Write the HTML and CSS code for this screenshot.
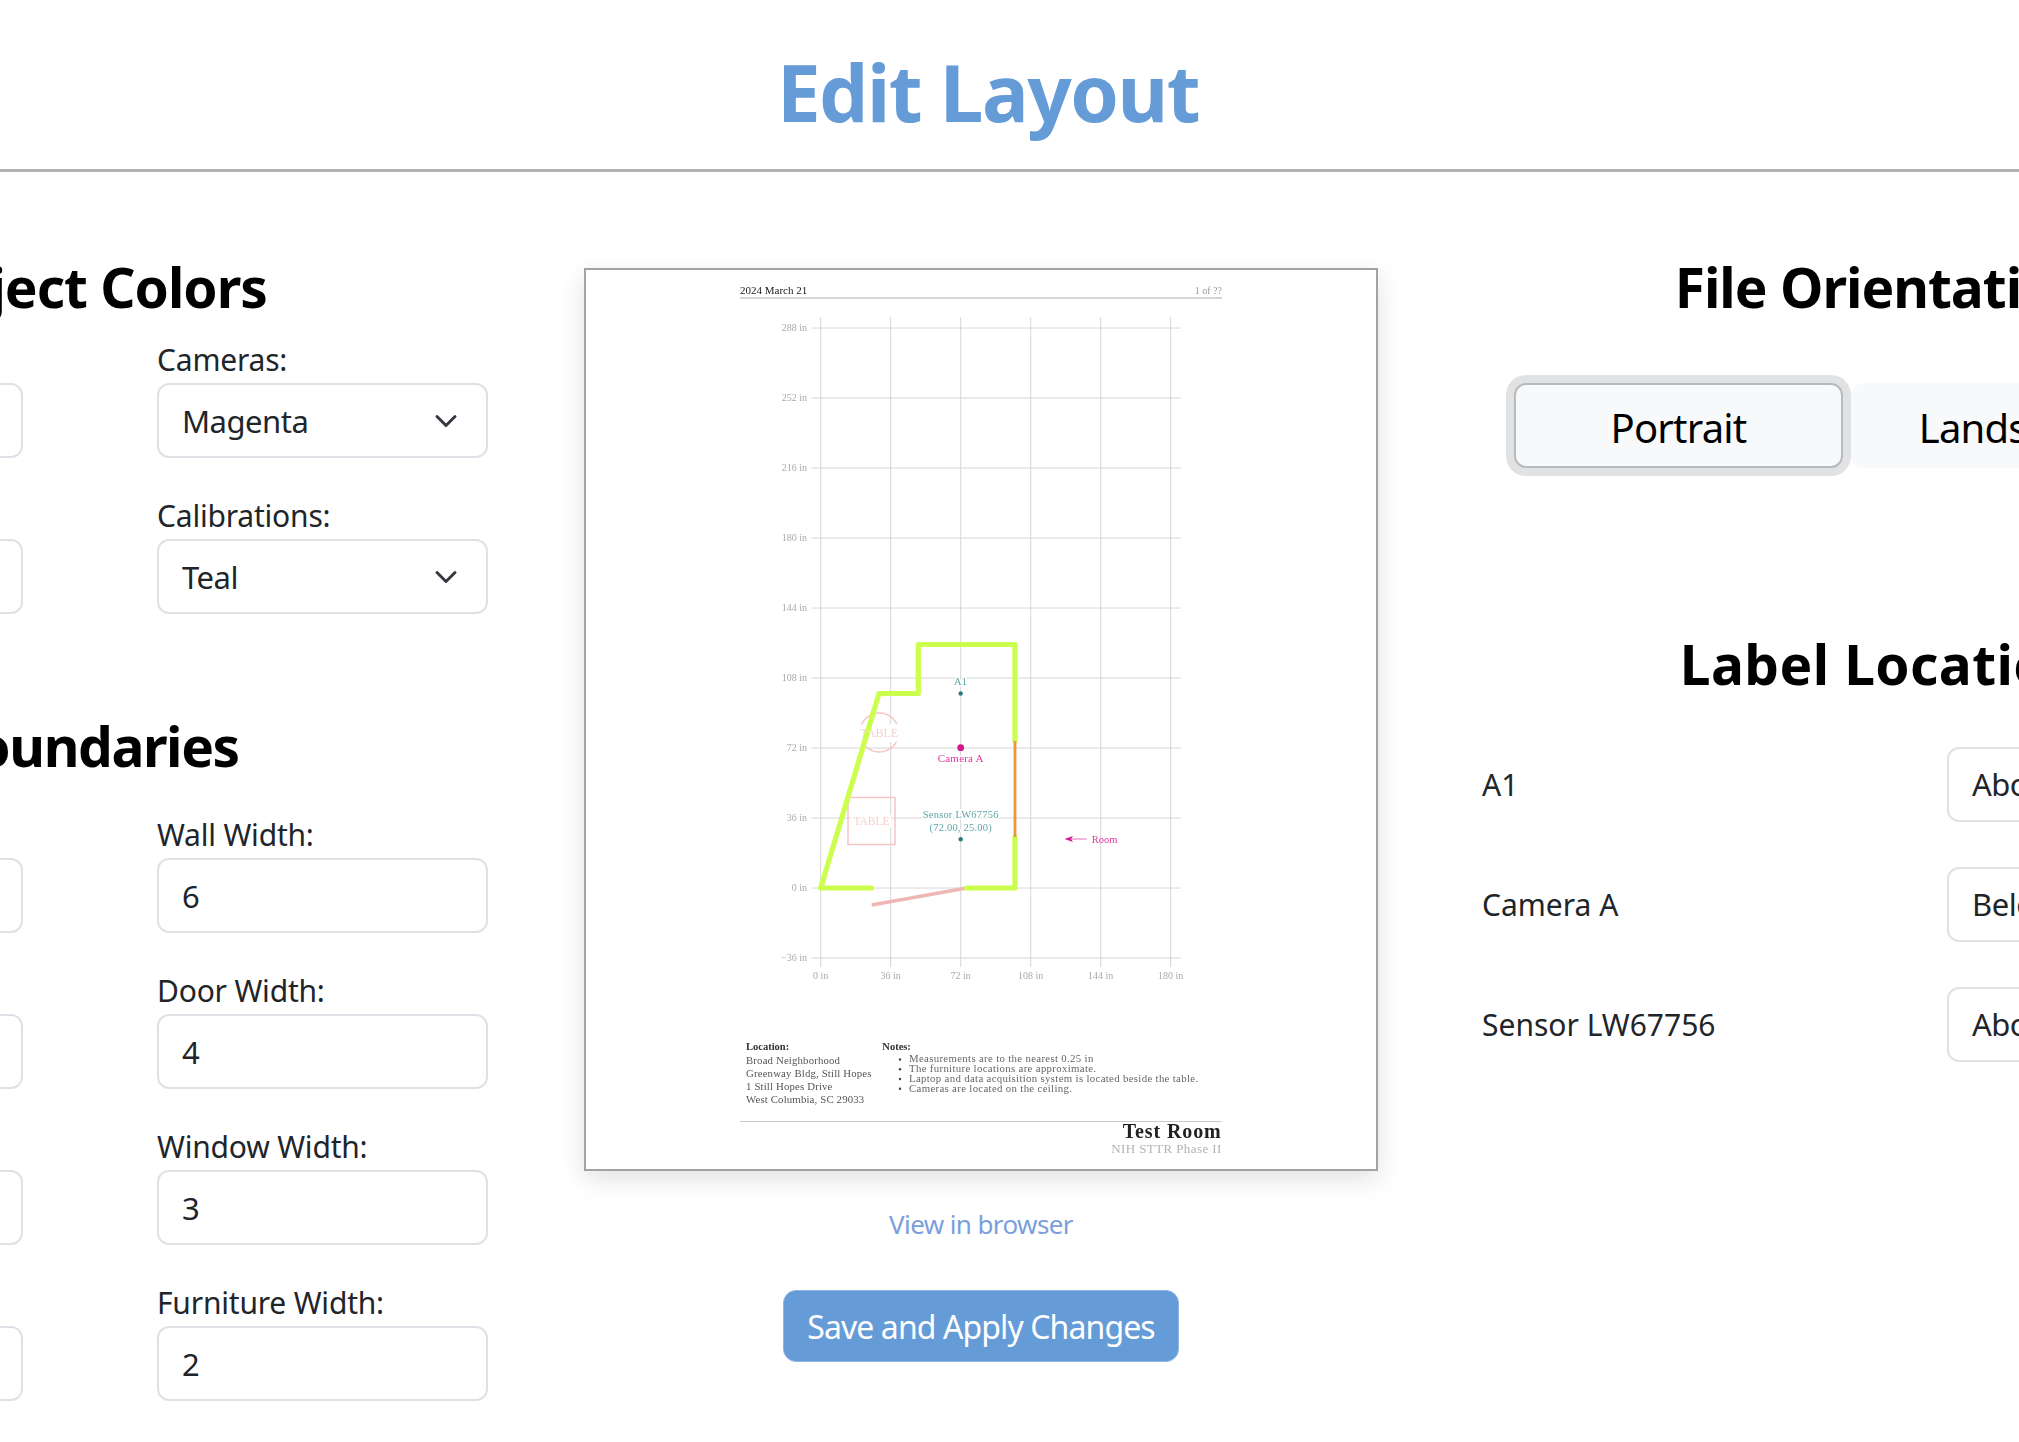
FILE: index.html
```html
<!DOCTYPE html>
<html lang="en">
<head>
    <meta charset="UTF-8">
    <meta name="viewport" content="width=device-width, initial-scale=1.0">
    <title>Edit Layout</title>
    <link rel="stylesheet" href="styles.css">
</head>
<body>
    <div class="page">
        <header class="page-header">
            <h1>Edit Layout</h1>
        </header>

        <main class="editor">
            <section class="options">
                <h2 class="section-title">Object Colors</h2>
                <div class="field-grid">
                    <div class="field">
                        <label for="color-walls">Walls:</label>
                        <select id="color-walls"><option>Lime</option></select>
                    </div>
                    <div class="field">
                        <label for="color-cameras">Cameras:</label>
                        <select id="color-cameras"><option>Magenta</option></select>
                    </div>
                    <div class="field">
                        <label for="color-doors">Doors:</label>
                        <select id="color-doors"><option>Pink</option></select>
                    </div>
                    <div class="field">
                        <label for="color-calibrations">Calibrations:</label>
                        <select id="color-calibrations"><option>Teal</option></select>
                    </div>
                </div>

                <h2 class="section-title section-title-boundaries">Boundaries</h2>
                <div class="field-grid">
                    <div class="field">
                        <label for="grid-width">Grid Width:</label>
                        <input type="text" id="grid-width" value="1">
                    </div>
                    <div class="field">
                        <label for="wall-width">Wall Width:</label>
                        <input type="text" id="wall-width" value="6">
                    </div>
                    <div class="field">
                        <label for="grid-spacing">Grid Spacing:</label>
                        <input type="text" id="grid-spacing" value="36">
                    </div>
                    <div class="field">
                        <label for="door-width">Door Width:</label>
                        <input type="text" id="door-width" value="4">
                    </div>
                    <div class="field">
                        <label for="margin-width">Margin:</label>
                        <input type="text" id="margin-width" value="36">
                    </div>
                    <div class="field">
                        <label for="window-width">Window Width:</label>
                        <input type="text" id="window-width" value="3">
                    </div>
                    <div class="field">
                        <label for="page-margin">Page Margin:</label>
                        <input type="text" id="page-margin" value="1">
                    </div>
                    <div class="field">
                        <label for="furniture-width">Furniture Width:</label>
                        <input type="text" id="furniture-width" value="2">
                    </div>
                </div>
            </section>

            <section class="preview-column">
                <div class="preview">
                    <svg class="preview-page" viewBox="586 270 790 899" xmlns="http://www.w3.org/2000/svg">
                        <!-- page header -->
                        <text class="pdf-head" x="740" y="294">2024 March 21</text>
                        <text class="pdf-page" x="1222" y="294" text-anchor="end">1 of ??</text>
                        <line class="pdf-rule" x1="740" y1="298" x2="1222" y2="298"/>

                        <!-- grid -->
                        <g class="grid">
                            <line x1="820.7" y1="317" x2="820.7" y2="967"/>
                            <line x1="890.7" y1="317" x2="890.7" y2="967"/>
                            <line x1="960.7" y1="317" x2="960.7" y2="967"/>
                            <line x1="1030.7" y1="317" x2="1030.7" y2="967"/>
                            <line x1="1100.7" y1="317" x2="1100.7" y2="967"/>
                            <line x1="1170.7" y1="317" x2="1170.7" y2="967"/>
                            <line x1="811.7" y1="328" x2="1180.7" y2="328"/>
                            <line x1="811.7" y1="398" x2="1180.7" y2="398"/>
                            <line x1="811.7" y1="468" x2="1180.7" y2="468"/>
                            <line x1="811.7" y1="538" x2="1180.7" y2="538"/>
                            <line x1="811.7" y1="608" x2="1180.7" y2="608"/>
                            <line x1="811.7" y1="678" x2="1180.7" y2="678"/>
                            <line x1="811.7" y1="748" x2="1180.7" y2="748"/>
                            <line x1="811.7" y1="818" x2="1180.7" y2="818"/>
                            <line x1="811.7" y1="888" x2="1180.7" y2="888"/>
                            <line x1="811.7" y1="958" x2="1180.7" y2="958"/>
                        </g>
                        <g class="axis" text-anchor="end">
                            <text x="807" y="331">288 in</text>
                            <text x="807" y="401">252 in</text>
                            <text x="807" y="471">216 in</text>
                            <text x="807" y="541">180 in</text>
                            <text x="807" y="611">144 in</text>
                            <text x="807" y="681">108 in</text>
                            <text x="807" y="751">72 in</text>
                            <text x="807" y="821">36 in</text>
                            <text x="807" y="891">0 in</text>
                            <text x="807" y="961">&#8722;36 in</text>
                        </g>
                        <g class="axis" text-anchor="middle">
                            <text x="820.7" y="979">0 in</text>
                            <text x="890.7" y="979">36 in</text>
                            <text x="960.7" y="979">72 in</text>
                            <text x="1030.7" y="979">108 in</text>
                            <text x="1100.7" y="979">144 in</text>
                            <text x="1170.7" y="979">180 in</text>
                        </g>

                        <!-- furniture -->
                        <circle class="furniture" cx="879.3" cy="732.5" r="19.5"/>
                        <text class="furniture-label furniture-label-round" x="879.3" y="736.5" text-anchor="middle">TABLE</text>
                        <rect class="furniture" x="848" y="797.5" width="47" height="47"/>
                        <text class="furniture-label" x="871.5" y="825" text-anchor="middle">TABLE</text>

                        <!-- room -->
                        <line class="door" x1="871.7" y1="905" x2="966.7" y2="888"/>
                        <polyline class="wall" points="871.7,888 820.7,888 879,693.5 918.3,693.5 918.3,644.5 1015,644.5 1015,741"/>
                        <polyline class="wall" points="1015,837 1015,888 966.7,888"/>
                        <line class="window" x1="1015" y1="741" x2="1015" y2="837"/>

                        <!-- markers -->
                        <text class="label-teal" x="960.7" y="684.5" text-anchor="middle">A1</text>
                        <circle class="dot-teal" cx="960.7" cy="693.5" r="2.2"/>
                        <circle class="dot-magenta" cx="960.7" cy="747.7" r="3.4"/>
                        <text class="label-magenta" x="960.7" y="761.5" text-anchor="middle">Camera A</text>
                        <text class="label-teal" x="960.7" y="817.5" text-anchor="middle">Sensor LW67756</text>
                        <text class="label-teal" x="960.7" y="830.5" text-anchor="middle">(72.00, 25.00)</text>
                        <circle class="dot-teal" cx="960.7" cy="839.3" r="2.2"/>
                        <line class="room-arrow" x1="1086.7" y1="839" x2="1070" y2="839"/>
                        <polygon class="room-head" points="1064.5,839 1073,836 1071,839 1073,842"/>
                        <text class="room-label" x="1091.7" y="843">Room</text>

                        <!-- footer -->
                        <text class="foot-bold" x="746" y="1050">Location:</text>
                        <text class="foot foot-address" x="746" y="1063.5">Broad Neighborhood</text>
                        <text class="foot foot-address" x="746" y="1076.5">Greenway Bldg, Still Hopes</text>
                        <text class="foot foot-address" x="746" y="1089.5">1 Still Hopes Drive</text>
                        <text class="foot foot-address" x="746" y="1102.5">West Columbia, SC 29033</text>
                        <text class="foot-bold" x="882.3" y="1050">Notes:</text>
                        <circle class="foot-bullet" cx="900" cy="1059.5" r="1.2"/>
                        <circle class="foot-bullet" cx="900" cy="1069.3" r="1.2"/>
                        <circle class="foot-bullet" cx="900" cy="1079" r="1.2"/>
                        <circle class="foot-bullet" cx="900" cy="1088.8" r="1.2"/>
                        <text class="foot foot-note" x="909" y="1062">Measurements are to the nearest 0.25 in</text>
                        <text class="foot foot-note" x="909" y="1072">The furniture locations are approximate.</text>
                        <text class="foot foot-note" x="909" y="1081.8">Laptop and data acquisition system is located beside the table.</text>
                        <text class="foot foot-note" x="909" y="1091.5">Cameras are located on the ceiling.</text>
                        <line class="foot-rule" x1="740" y1="1121.5" x2="1221.7" y2="1121.5"/>
                        <text class="foot-title" x="1221.7" y="1138" text-anchor="end">Test Room</text>
                        <text class="foot-sub" x="1221.7" y="1153" text-anchor="end">NIH STTR Phase II</text>
                    </svg>
                </div>
                <a class="view-link" href="#">View in browser</a>
                <button class="save-button" type="button">Save and Apply Changes</button>
            </section>

            <section class="settings">
                <h2 class="section-title">File Orientation</h2>
                <div class="orientation">
                    <button class="orientation-button is-active" type="button">Portrait</button>
                    <button class="orientation-button" type="button">Landscape</button>
                </div>

                <h2 class="section-title section-title-labels">Label Location</h2>
                <div class="label-row">
                    <label for="label-a1">A1</label>
                    <select id="label-a1"><option>Above</option></select>
                </div>
                <div class="label-row">
                    <label for="label-camera">Camera A</label>
                    <select id="label-camera"><option>Below</option></select>
                </div>
                <div class="label-row">
                    <label for="label-sensor">Sensor LW67756</label>
                    <select id="label-sensor"><option>Above</option></select>
                </div>
            </section>
        </main>
    </div>
</body>
</html>
```

FILE: styles.css
```css
html, body {
    margin: 0;
    padding: 0;
    height: 100%;
    overflow: hidden;
    background: #fff;
}

body {
    font-family: "Noto Sans", "Open Sans", sans-serif;
    color: #212529;
}

.page {
    width: 2660px;
    margin-left: -342px;
}

.page-header {
    height: 169px;
    border-bottom: 3px solid #b4b1b1;
    text-align: center;
}

.page-header h1 {
    margin: 0;
    padding-top: 44px;
    font-size: 78px;
    line-height: 96px;
    font-weight: 700;
    color: #659bd6;
    letter-spacing: -1.5px;
}

.editor {
    display: flex;
    align-items: flex-start;
    margin-left: 34px;
}

.section-title {
    margin: 82px 0 24px;
    font-size: 55px;
    line-height: 66px;
    font-weight: 700;
    color: #000;
    text-align: center;
    letter-spacing: -1px;
}

.section-title-boundaries {
    margin: 57px 0 40px;
    letter-spacing: -1.4px;
}

.section-title-labels {
    margin: 163px 0 0;
    letter-spacing: 0.4px;
}

/* left column */
.options {
    flex: none;
    width: 796px;
    margin-right: 96px;
}

.field-grid {
    display: grid;
    grid-template-columns: 331px 331px;
    column-gap: 134px;
}

.field {
    margin-bottom: 42px;
}

.field label {
    display: block;
    margin-bottom: 7px;
    font-size: 30px;
    line-height: 32px;
    letter-spacing: -0.2px;
}

select, input[type="text"] {
    display: block;
    box-sizing: border-box;
    width: 100%;
    height: 75px;
    margin: 0;
    padding: 0 23px;
    border: 2px solid #dee2e6;
    border-radius: 12px;
    background-color: #fff;
    font-family: inherit;
    font-size: 31px;
    color: #212529;
    letter-spacing: -0.5px;
}

select {
    appearance: none;
    background-image: url("data:image/svg+xml,%3csvg xmlns='http://www.w3.org/2000/svg' viewBox='0 0 16 16'%3e%3cpath fill='none' stroke='%23343a40' stroke-linecap='round' stroke-linejoin='round' stroke-width='2' d='m2 5 6 6 6-6'/%3e%3c/svg%3e");
    background-repeat: no-repeat;
    background-position: right 28px center;
    background-size: 24px 24px;
}

/* middle column */
.preview-column {
    flex: none;
    width: 794px;
    margin-right: 104px;
    display: flex;
    flex-direction: column;
    align-items: center;
}

.preview {
    box-sizing: border-box;
    width: 794px;
    height: 903px;
    margin-top: 96px;
    border: 2px solid #a3a3a3;
    background: #fff;
    box-shadow: 0 8px 24px rgba(0, 0, 0, 0.12);
}

.preview-page {
    display: block;
    width: 790px;
    height: 899px;
    filter: blur(0.45px);
}

.view-link {
    margin-top: 37px;
    font-size: 26px;
    line-height: 32px;
    color: #7a9fdc;
    text-decoration: none;
    letter-spacing: -0.6px;
}

.save-button {
    box-sizing: border-box;
    width: 396px;
    height: 72px;
    margin-top: 50px;
    padding-top: 2px;
    border: 1px solid #8fb6e2;
    border-radius: 13px;
    background: #659bd6;
    font-family: inherit;
    font-size: 32px;
    color: #fff;
    letter-spacing: -0.9px;
}

/* right column */
.settings {
    flex: none;
    width: 800px;
}

.orientation {
    display: flex;
    align-items: center;
    margin-top: 63px;
    margin-left: 32px;
}

.orientation-button {
    box-sizing: border-box;
    width: 329px;
    height: 85px;
    padding-top: 4px;
    border: 2px solid transparent;
    border-radius: 12px;
    background: #f8f9fa;
    font-family: inherit;
    font-size: 40px;
    color: #000;
    letter-spacing: -0.8px;
}

.orientation-button.is-active {
    border-color: #b9babc;
    box-shadow: 0 0 0 8px #e1e2e4;
    margin-right: 8px;
}

.label-row {
    display: flex;
    align-items: center;
    height: 120px;
}

.section-title-labels + .label-row {
    margin-top: 27px;
}

.label-row label {
    flex: none;
    width: 465px;
    font-size: 30px;
}

.label-row select {
    width: 331px;
}

/* preview drawing */
.preview-page text {
    font-family: "Liberation Serif", "DejaVu Serif", serif;
}

.pdf-head {
    font-size: 11px;
    fill: #222;
}

.pdf-page {
    font-size: 10px;
    fill: #999;
}

.pdf-rule {
    stroke: #aaa;
    stroke-width: 1;
}

.grid line {
    stroke: #d6d6d6;
    stroke-width: 1;
}

.axis text {
    font-size: 10px;
    fill: #aaa;
}

.wall {
    fill: none;
    stroke: #ccff4d;
    stroke-width: 5.2;
    stroke-linecap: round;
    stroke-linejoin: round;
}

.window {
    stroke: #ef9440;
    stroke-width: 2.8;
}

.door {
    stroke: #efb6b6;
    stroke-width: 3.4;
}

.furniture {
    fill: none;
    stroke: #f5c6c6;
    stroke-width: 1.5;
}

.furniture-label {
    font-size: 11.5px;
    fill: #f7d0d0;
    stroke: #fff;
    stroke-width: 5px;
    paint-order: stroke;
}

.furniture-label-round {
    font-size: 12px;
    stroke-width: 9px;
}

.label-teal {
    font-size: 10.5px;
    letter-spacing: 0.2px;
    fill: #62a5a5;
    stroke: #fff;
    stroke-width: 3px;
    paint-order: stroke;
}

.dot-teal {
    fill: #2e7a7a;
}

.dot-magenta {
    fill: #d4198f;
}

.label-magenta {
    font-size: 11px;
    letter-spacing: 0.2px;
    fill: #e0379f;
    stroke: #fff;
    stroke-width: 3px;
    paint-order: stroke;
}

.room-arrow {
    stroke: #e66ab8;
    stroke-width: 1;
}

.room-head {
    fill: #d4198f;
}

.room-label {
    font-size: 10.5px;
    fill: #e0379f;
}

.foot {
    font-size: 10.8px;
}

.foot-address {
    fill: #555;
    letter-spacing: 0.15px;
}

.foot-note {
    fill: #666;
    letter-spacing: 0.33px;
}

.foot-bold {
    font-size: 10.5px;
    font-weight: 700;
    fill: #333;
}

.foot-bullet {
    fill: #444;
}

.foot-rule {
    stroke: #ccc;
    stroke-width: 1;
}

.foot-title {
    font-size: 20px;
    font-weight: 700;
    fill: #222;
    letter-spacing: 0.9px;
}

.foot-sub {
    font-size: 13px;
    fill: #b3b3b3;
    letter-spacing: 0.4px;
}
```
